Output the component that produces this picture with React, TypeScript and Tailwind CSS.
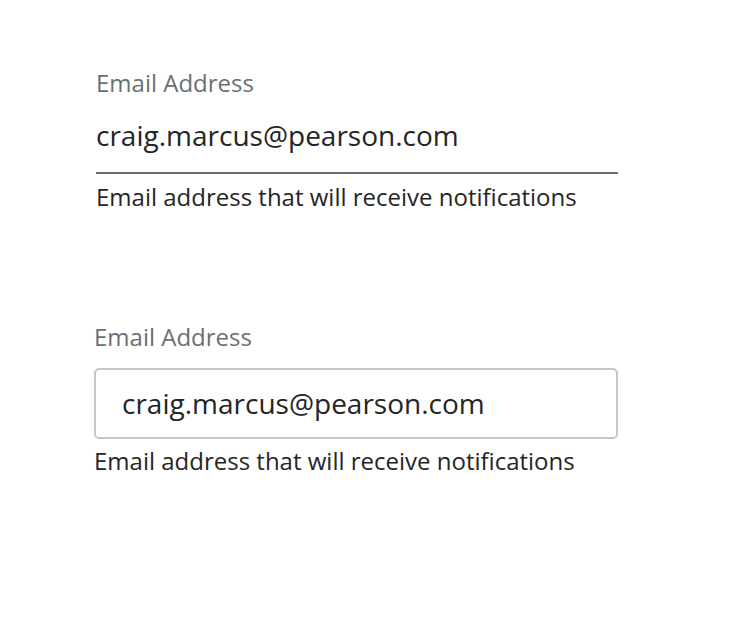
export default function App() {
  return (
    <div
      className="min-h-[636px] w-[740px] bg-white text-[#252525]"
      style={{ fontFamily: '"Open Sans", sans-serif' }}
    >
      {/* underline style */}
      <div className="ml-[96px] flex w-[522px] flex-col pt-[67px]">
        <label className="text-[24px] leading-[32px] text-[#6a7070]">Email Address</label>
        <input
          readOnly
          defaultValue="craig.marcus@pearson.com"
          className="mt-[18px] h-[57px] border-0 border-b-2 border-[#6a6f70] bg-transparent pb-[19px] text-[28px] leading-[36px] text-[#252525] outline-none"
        />
        <p className="mt-[7px] text-[24px] leading-[32px]">Email address that will receive notifications</p>
      </div>

      {/* outlined style */}
      <div className="ml-[94px] mt-[108px] flex w-[524px] flex-col">
        <label className="text-[24px] leading-[32px] text-[#6a7070]">Email Address</label>
        <input
          readOnly
          defaultValue="craig.marcus@pearson.com"
          className="mt-[15px] h-[71px] rounded-[5px] border-2 border-[#c7c7c7] bg-white px-[26px] pb-[2px] text-[28px] leading-[36px] text-[#252525] outline-none"
        />
        <p className="mt-[6px] text-[24px] leading-[32px]">Email address that will receive notifications</p>
      </div>
    </div>
  );
}
